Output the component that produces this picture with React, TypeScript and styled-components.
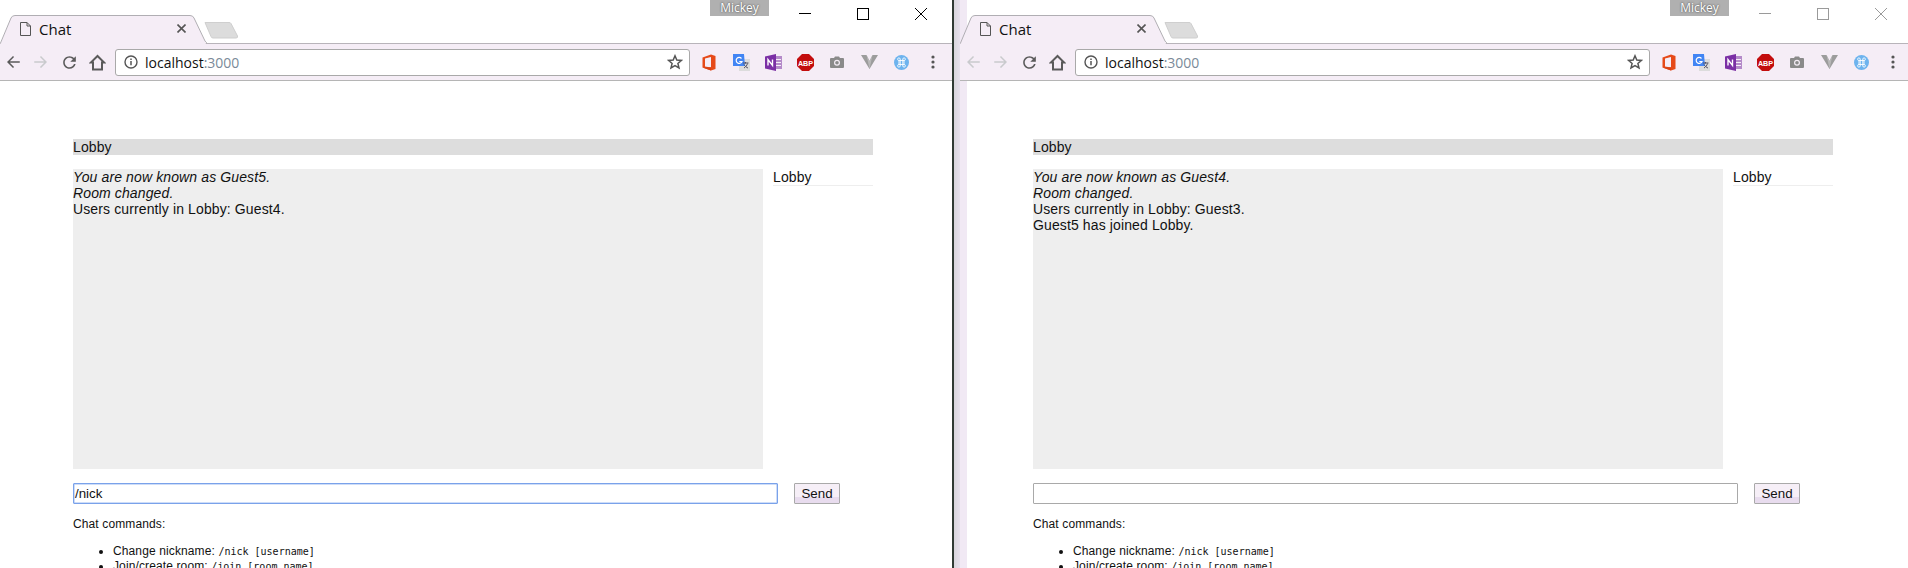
import styled, {createGlobalStyle} from 'styled-components';

const GlobalStyle = createGlobalStyle`
  html, body {
    margin: 0;
    padding: 0;
    height: 568px;
    overflow: hidden;
    background: #fff;
  }
`;

const Screen = styled.div`
  display: flex;
  width: 1908px;
  height: 568px;
  overflow: hidden;
  font-family: "Liberation Sans", Arial, sans-serif;
  color: #111;
`;

const Divider = styled.div`
  width: 2px;
  flex: none;
  background: #2f3a33;
`;

const Gutter = styled.div`
  width: 6px;
  flex: none;
  background: linear-gradient(to right, #d8d6dc, #e6e0ec);
`;

const Frame = styled.div<{$width: number; $strip?: boolean}>`
  width: ${p => p.$width}px;
  flex: none;
  display: flex;
  flex-direction: column;
  background: ${p => p.$strip ? 'linear-gradient(to right, #f1e9f4 0, #f1e9f4 7px, #fff 7px)' : '#fff'};
`;

// Title bar
const TitleBar = styled.div`
  position: relative;
  height: 43px;
  flex: none;
  display: flex;
  align-items: flex-end;
  border-bottom: 1px solid #b8b4ba;
`;

const Tab = styled.div`
  position: relative;
  width: 207px;
  height: 29px;
  margin-bottom: -1px;
  flex: none;
  display: flex;
  align-items: center;
  padding: 0 0 2px 20px;
  box-sizing: border-box;
`;

const TabOutline = styled.svg`
  position: absolute;
  left: 0;
  top: 0;
`;

const TabIcon = styled.svg`
  position: relative;
  flex: none;
`;

const TabTitle = styled.span`
  position: relative;
  margin-left: 8px;
  font-family: "Open Sans", "Noto Sans", sans-serif;
  font-size: 15px;
  color: #111;
  width: 138px;
`;

const TabClose = styled.svg`
  position: relative;
  flex: none;
`;

const NewTab = styled.svg`
  flex: none;
  margin: 0 0 4px -3px;
`;

const UserBadge = styled.div`
  position: absolute;
  left: 710px;
  top: 0;
  width: 59px;
  height: 16px;
  background: #b0b0b0;
  color: #fff;
  font-family: "Open Sans", "Noto Sans", sans-serif;
  font-size: 12px;
  line-height: 15px;
  text-align: center;
  text-shadow: 0 0 2px #333;
`;

const WindowControls = styled.div<{$dim?: boolean}>`
  position: absolute;
  left: 799px;
  top: 8px;
  display: flex;
  gap: 46px;
  color: ${p => p.$dim ? '#9a9a9a' : '#000'};
`;

// Toolbar
const Toolbar = styled.div`
  height: 36px;
  flex: none;
  display: flex;
  align-items: center;
  background: #f5edf6;
  border-bottom: 1px solid #b5b5b5;
`;

const NavButton = styled.span<{$off?: boolean}>`
  width: 28px;
  height: 28px;
  flex: none;
  display: flex;
  align-items: center;
  justify-content: center;
  color: ${p => p.$off ? '#c9cacd' : '#5a5a5a'};
`;

const NavGroup = styled.div`
  display: flex;
  margin-left: -1px;
`;

const Omnibox = styled.div`
  width: 575px;
  height: 27px;
  margin-left: 4px;
  flex: none;
  display: flex;
  align-items: center;
  background: #fff;
  border: 1px solid #a9a9a9;
  border-radius: 3px;
  box-sizing: border-box;
  padding: 0 6px 0 8px;
  color: #555;
`;

const Url = styled.span`
  margin-left: 7px;
  font-family: "Open Sans", "Noto Sans", sans-serif;
  font-size: 14px;
  color: #111;
  flex: 1;
`;

const Port = styled.span`
  color: #7a8a99;
`;

const Extensions = styled.div`
  display: flex;
  align-items: center;
  margin-left: 3px;
`;

const Extension = styled.span`
  width: 32px;
  height: 28px;
  flex: none;
  display: flex;
  align-items: center;
  justify-content: center;
`;

// Chat page
const Page = styled.div`
  padding: 58px 0 0 73px;
`;

const Content = styled.div`
  width: 800px;
`;

const RoomBar = styled.div`
  height: 16px;
  background: #ddd;
  font-size: 14px;
  line-height: 16px;
  letter-spacing: 0.12px;
`;

const ChatRow = styled.div`
  display: flex;
  justify-content: space-between;
  margin-top: 14px;
`;

const Messages = styled.div`
  width: 690px;
  height: 300px;
  background: #eee;
  font-size: 14px;
  line-height: 16px;
  letter-spacing: 0.12px;
`;

const SystemLine = styled.div<{$italic?: boolean}>`
  font-style: ${p => p.$italic ? 'italic' : 'normal'};
`;

const RoomList = styled.div`
  width: 100px;
`;

const RoomItem = styled.div`
  height: 16px;
  font-size: 14px;
  line-height: 16px;
  letter-spacing: 0.12px;
  border-bottom: 1px solid #eee;
`;

const SendForm = styled.div`
  display: flex;
  gap: 16px;
  margin-top: 14px;
`;

const Input = styled.div<{$focus?: boolean}>`
  width: 705px;
  height: 21px;
  box-sizing: border-box;
  border: 1px solid ${p => p.$focus ? '#7aa2ea' : '#a9a9a9'};
  box-shadow: ${p => p.$focus ? 'inset 0 0 0 0.5px #9dbcf2' : 'none'};
  border-radius: 1px;
  padding-left: 1px;
  font-size: 13.33px;
  line-height: 19px;
  background: #fff;
`;

const SendButton = styled.div`
  width: 46px;
  height: 21px;
  box-sizing: border-box;
  border: 1px solid #a9a9a9;
  border-radius: 1px;
  background: linear-gradient(to bottom, #f6eff7 0, #f6eff7 70%, #e8dcee 70%);
  font-size: 13.33px;
  line-height: 19px;
  text-align: center;
`;

const HelpTitle = styled.div`
  margin-top: 13px;
  font-size: 12px;
  line-height: 14px;
  letter-spacing: 0.12px;
`;

const HelpList = styled.ul`
  margin: 13px 0 0;
  padding: 0 0 0 40px;
  font-size: 12px;
  line-height: 14px;
  letter-spacing: 0.12px;
`;

const Code = styled.code`
  font-family: "DejaVu Sans Mono", "Liberation Mono", monospace;
  font-size: 10px;
  letter-spacing: 0;
`;

// Drawings
const Arrow = ({dir}: {dir: 'left' | 'right'}) => (
  <svg width="18" height="18" viewBox="0 0 24 24" fill="currentColor" style={dir === 'right' ? {transform: 'scaleX(-1)'} : undefined}>
    <path d="M21 11H7.8l5.6-5.6L12 4l-8 8 8 8 1.4-1.4L7.8 13H21z" />
  </svg>
);

const Reload = () => (
  <svg width="19" height="19" viewBox="0 0 24 24" fill="currentColor">
    <path d="M17.65 6.35C16.2 4.9 14.21 4 12 4c-4.42 0-7.99 3.58-7.99 8s3.57 8 7.99 8c3.73 0 6.84-2.55 7.73-6h-2.08c-.82 2.33-3.04 4-5.65 4-3.31 0-6-2.69-6-6s2.69-6 6-6c1.66 0 3.14.69 4.22 1.78L13 11h7V4l-2.35 2.35z" />
  </svg>
);

const Home = () => (
  <svg width="17" height="17" viewBox="0 0 17 17" fill="none" stroke="currentColor" strokeWidth="2">
    <path d="M8.5 2 1.8 8.6H4V15.5H13V8.6H15.2Z" />
  </svg>
);

const Info = () => (
  <svg width="14" height="14" viewBox="0 0 14 14" fill="none" stroke="currentColor">
    <circle cx="7" cy="7" r="6" strokeWidth="1.4" />
    <path d="M7 6v4.2M7 3.4v1.5" strokeWidth="1.5" />
  </svg>
);

const Star = () => (
  <svg width="16" height="16" viewBox="0 0 16 16" fill="none" stroke="#555" strokeWidth="1.5">
    <path d="M8 1.8l1.8 4.2 4.6.4-3.5 3 1.1 4.5L8 11.5l-4 2.4 1.1-4.5-3.5-3 4.6-.4z" />
  </svg>
);

const OfficeIcon = () => (
  <svg width="14" height="17" viewBox="0 0 14 17">
    <path d="M0.5 3.5 9 0.5 13.5 2V15L9 16.5 0.5 13.5Z" fill="#e64a19" />
    <path d="M3 4.5 9 3V13.5L3 12.5Z" fill="#f5edf6" />
    <path d="M0.5 13.5 9 13.2V16.5Z" fill="#d84315" />
  </svg>
);

const TranslateIcon = () => (
  <svg width="17" height="17" viewBox="0 0 17 17">
    <rect x="6" y="5" width="11" height="12" fill="#dcdcdc" />
    <path d="M0 0H11L12 12H0Z" fill="#4285f4" />
    <path d="M8.5 4.5A3 3 0 1 0 9 7.5H6.3" fill="none" stroke="#fff" strokeWidth="1.2" />
    <path d="M10 9h5.5M12.5 8v1.5M14.5 9.5c-.5 2-2 3.5-3.5 4.5M11 10.5c.8 1.5 2.4 3 4 3.5" fill="none" stroke="#556" strokeWidth="1" />
  </svg>
);

const OneNoteIcon = () => (
  <svg width="17" height="17" viewBox="0 0 17 17">
    <rect x="9" y="2" width="8" height="13" fill="#b48ac9" />
    <path d="M11 5.5h5M11 8.5h5M11 11.5h5" stroke="#f5edf6" strokeWidth="1" />
    <path d="M0 2.5 11 0V17L0 14.5Z" fill="#7b2fa5" />
    <path d="M3 11.5V5.5L7.5 11.5V5.5" fill="none" stroke="#fff" strokeWidth="1.4" />
  </svg>
);

const AbpIcon = () => (
  <svg width="17" height="17" viewBox="0 0 17 17">
    <path d="M5 0H12L17 5V12L12 17H5L0 12V5Z" fill="#c30d0d" />
    <text x="8.5" y="11.5" textAnchor="middle" fontFamily="Liberation Sans" fontWeight="700" fontSize="7.2" fill="#fff">ABP</text>
  </svg>
);

const CameraIcon = () => (
  <svg width="14" height="12" viewBox="0 0 14 12">
    <path d="M1 2H4L5 0.5H9L10 2H13A1 1 0 0 1 14 3V11A1 1 0 0 1 13 12H1A1 1 0 0 1 0 11V3A1 1 0 0 1 1 2Z" fill="#8a8a8a" />
    <circle cx="7" cy="6.8" r="3" fill="#f5edf6" />
    <circle cx="7" cy="6.8" r="1.8" fill="#8a8a8a" />
  </svg>
);

const VIcon = () => (
  <svg width="17" height="14" viewBox="0 0 17 14">
    <path d="M0 0H5.5L8.5 6 11.5 0H17L8.5 14Z" fill="#9c9c9c" />
    <path d="M5.5 0 8.5 6 11.5 0 8.5 14Z" fill="#b8b8b8" />
  </svg>
);

const GlobeIcon = () => (
  <svg width="15" height="15" viewBox="0 0 15 15">
    <circle cx="7.5" cy="7.5" r="7.5" fill="#6db3ee" />
    <path d="M5 5.5H10V9.5H5ZM5 5.5A1.3 1.3 0 1 1 6.2 4V11A1.3 1.3 0 1 1 5 9.5M10 5.5A1.3 1.3 0 1 0 8.8 4V11A1.3 1.3 0 1 0 10 9.5" fill="none" stroke="#fff" strokeWidth="0.9" />
  </svg>
);

const MenuDots = () => (
  <svg width="4" height="14" viewBox="0 0 4 14" fill="#555">
    <circle cx="2" cy="2" r="1.6" />
    <circle cx="2" cy="7" r="1.6" />
    <circle cx="2" cy="12" r="1.6" />
  </svg>
);

const extensionIcons = [OfficeIcon, TranslateIcon, OneNoteIcon, AbpIcon, CameraIcon, VIcon, GlobeIcon, MenuDots];

function BrowserChrome(prop: {active: boolean; canGoBack: boolean}) {
  return (
    <>
      <TitleBar>
        <Tab>
          <TabOutline width="207" height="29" viewBox="0 0 207 29">
            <path d="M0.5 29 L11 3 Q12 0.5 15 0.5 H190 Q193 0.5 194 3 L206 29 Z" fill="#f5edf6" />
            <path d="M0.5 28 L11 3 Q12 0.5 15 0.5 H190 Q193 0.5 194 3 L205 26 Q206 28 208 28" fill="none" stroke="#b0aeb3" />
          </TabOutline>
          <TabIcon width="11" height="14" viewBox="0 0 11 14" fill="none" stroke="#555">
            <path d="M0.5 0.5H7L10.5 4V13.5H0.5ZM7 0.5V4H10.5" />
          </TabIcon>
          <TabTitle>Chat</TabTitle>
          <TabClose width="9" height="9" viewBox="0 0 9 9" stroke="#555" strokeWidth="1.6">
            <path d="M0.5 0.5 8.5 8.5M8.5 0.5 0.5 8.5" />
          </TabClose>
        </Tab>
        <NewTab width="35" height="18" viewBox="0 0 35 18">
          <path d="M1 1.5 H25 Q26.5 1.5 27 2.5 L33.5 15 Q34 17 32 17 H9 Q7.5 17 7 15.5 Z" fill="#dcdcdc" stroke="#cfcfcf" />
        </NewTab>
        <UserBadge>Mickey</UserBadge>
        <WindowControls $dim={!prop.active}>
          <svg width="12" height="12" viewBox="0 0 12 12" stroke="currentColor"><path d="M0 5.5H12" /></svg>
          <svg width="12" height="12" viewBox="0 0 12 12" fill="none" stroke="currentColor"><rect x="0.5" y="0.5" width="11" height="11" /></svg>
          <svg width="12" height="12" viewBox="0 0 12 12" stroke="currentColor"><path d="M0 0 12 12M12 0 0 12" /></svg>
        </WindowControls>
      </TitleBar>
      <Toolbar>
        <NavGroup>
          <NavButton $off={!prop.canGoBack}><Arrow dir="left" /></NavButton>
          <NavButton $off><Arrow dir="right" /></NavButton>
          <NavButton><Reload /></NavButton>
          <NavButton><Home /></NavButton>
        </NavGroup>
        <Omnibox>
          <Info />
          <Url>localhost<Port>:3000</Port></Url>
          <Star />
        </Omnibox>
        <Extensions>
          {extensionIcons.map((Icon, index) => (
            <Extension key={index}><Icon /></Extension>
          ))}
        </Extensions>
      </Toolbar>
    </>
  );
}

function ChatPage(prop: {lines: {text: string; italic?: boolean}[]; input: string; focus: boolean}) {
  return (
    <Page>
      <Content>
        <RoomBar>Lobby</RoomBar>
        <ChatRow>
          <Messages>
            {prop.lines.map(line => (
              <SystemLine key={line.text} $italic={line.italic}>{line.text}</SystemLine>
            ))}
          </Messages>
          <RoomList>
            <RoomItem>Lobby</RoomItem>
          </RoomList>
        </ChatRow>
        <SendForm>
          <Input $focus={prop.focus}>{prop.input}</Input>
          <SendButton>Send</SendButton>
        </SendForm>
        <HelpTitle>Chat commands:</HelpTitle>
        <HelpList>
          <li>Change nickname: <Code>/nick [username]</Code></li>
          <li>Join/create room: <Code>/join [room name]</Code></li>
        </HelpList>
      </Content>
    </Page>
  );
}

export default function App() {
  return (
    <>
      <GlobalStyle />
      <Screen>
        <Frame $width={952}>
          <BrowserChrome active canGoBack />
          <ChatPage
            focus
            input="/nick"
            lines={[
              {text: 'You are now known as Guest5.', italic: true},
              {text: 'Room changed.', italic: true},
              {text: 'Users currently in Lobby: Guest4.'},
            ]}
          />
        </Frame>
        <Divider />
        <Gutter />
        <Frame $width={948} $strip>
          <BrowserChrome active={false} canGoBack={false} />
          <ChatPage
            focus={false}
            input=""
            lines={[
              {text: 'You are now known as Guest4.', italic: true},
              {text: 'Room changed.', italic: true},
              {text: 'Users currently in Lobby: Guest3.'},
              {text: 'Guest5 has joined Lobby.'},
            ]}
          />
        </Frame>
      </Screen>
    </>
  );
}
